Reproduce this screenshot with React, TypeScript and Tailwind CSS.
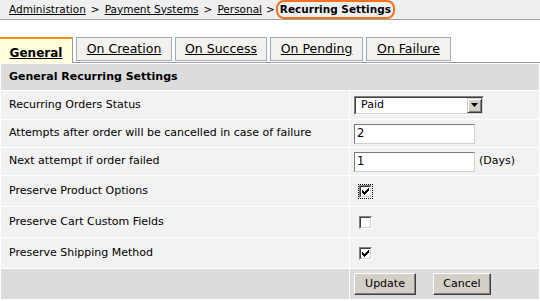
import React from 'react';

const font = "font-['DejaVu_Sans',Tahoma,sans-serif]";

function Checkbox({ checked, focused }: { checked: boolean; focused?: boolean }) {
  return (
    <div className={`p-px ${focused ? 'outline-1 outline-dotted outline-black -outline-offset-1' : ''}`}>
      <div className="w-[13px] h-[13px] border border-t-[#808080] border-l-[#808080] border-r-white border-b-white">
        <div className="w-full h-full bg-white border border-t-[#404040] border-l-[#404040] border-r-[#d4d0c8] border-b-[#d4d0c8] flex items-center justify-center">
          {checked && (
            <svg width="7" height="7" viewBox="0 0 7 7">
              <path d="M0 2h1v1h1v1h1V3h1V2h1V1h1V0h1v3H6v1H5v1H4v1H3v1H2V6H1V5H0z" fill="#000" />
            </svg>
          )}
        </div>
      </div>
    </div>
  );
}

function Button({ label, width }: { label: string; width: string }) {
  return (
    <button className={`${width} h-[22px] bg-[#d4d0c8] border border-t-white border-l-white border-r-[#404040] border-b-[#404040] shadow-[inset_-1px_-1px_0_#808080] text-[11px] text-black`}>
      {label}
    </button>
  );
}

export default function App() {
  const tabs = [
    { label: 'On Creation', w: 'w-[96px]' },
    { label: 'On Success', w: 'w-[92px]' },
    { label: 'On Pending', w: 'w-[93px]' },
    { label: 'On Failure', w: 'w-[85px]' },
  ];

  const rowCell = 'bg-[#f2f2f2] flex items-center';

  return (
    <div className={`${font} w-[540px] h-[301px] bg-white text-black text-[11px] overflow-hidden`}>
      {/* Breadcrumb */}
      <div className="h-[20px] bg-[#efefef] border-b border-[#a0a0a0] flex items-center pl-[9px] text-[10.5px]">
        <span className="underline">Administration</span>
        <span className="mx-[5px]">&gt;</span>
        <span className="underline">Payment Systems</span>
        <span className="mx-[5px]">&gt;</span>
        <span className="underline">Personal</span>
        <span className="ml-[4px] mr-px">&gt;</span>
        <span className="h-[19px] self-start border-2 border-[#f4721e] rounded-[8px] px-[2px] flex items-center font-bold text-[10.5px]">
          Recurring Settings
        </span>
      </div>

      {/* Tabs */}
      <div className="mt-[17px] h-[26px] flex items-start gap-[3px] border-b border-[#9a9a9a]">
        <div className="w-[73px] h-[26px] -mb-px bg-[#ffffdc] border-t-2 border-t-[#ff8a00] border-r border-r-[#9a9a9a] flex items-center justify-center pt-[3px] font-bold underline text-[12px]">
          General
        </div>
        {tabs.map((t) => (
          <div
            key={t.label}
            className={`${t.w} h-[24px] bg-[#f4f2ee] border border-[#9cacb8] flex items-center justify-center underline text-[12.5px]`}
          >
            {t.label}
          </div>
        ))}
      </div>

      {/* Settings table */}
      <div className="p-px bg-white">
        <div className="grid grid-cols-[348px_1fr] gap-px">
          <div className="col-span-2 h-[26px] bg-[#dcdcdc] flex items-center pl-[8px] font-bold">
            General Recurring Settings
          </div>

          <div className={`${rowCell} h-[28px] pl-[8px]`}>Recurring Orders Status</div>
          <div className={`${rowCell} pl-[4px]`}>
            <div className="w-[130px] h-[19px] border border-t-[#808080] border-l-[#808080] border-r-white border-b-white">
              <div className="h-full bg-white border border-t-[#404040] border-l-[#404040] border-r-[#d4d0c8] border-b-[#d4d0c8] flex items-center">
                <span className="flex-1 pl-[5px]">Paid</span>
                <div className="w-[15px] h-[15px] bg-[#d4d0c8] border border-t-[#d4d0c8] border-l-[#d4d0c8] border-r-[#404040] border-b-[#404040] shadow-[inset_1px_1px_0_#fff,inset_-1px_-1px_0_#808080] flex items-center justify-center">
                  <svg width="7" height="4" viewBox="0 0 7 4">
                    <path d="M0 0h7L3.5 4z" fill="#000" />
                  </svg>
                </div>
              </div>
            </div>
          </div>

          <div className={`${rowCell} h-[27px] pl-[8px]`}>Attempts after order will be cancelled in case of failure</div>
          <div className={`${rowCell} pl-[4px]`}>
            <div className="w-[121px] h-[20px] bg-white border border-t-[#7a7a7a] border-l-[#7a7a7a] border-r-[#d0d0d0] border-b-[#d0d0d0] flex items-center pl-[2px] text-[11.5px]">
              2
            </div>
          </div>

          <div className={`${rowCell} h-[27px] pl-[8px]`}>Next attempt if order failed</div>
          <div className={`${rowCell} pl-[4px]`}>
            <div className="w-[121px] h-[20px] bg-white border border-t-[#7a7a7a] border-l-[#7a7a7a] border-r-[#d0d0d0] border-b-[#d0d0d0] flex items-center pl-[2px] text-[11.5px]">
              1
            </div>
            <span className="ml-[4px]">(Days)</span>
          </div>

          <div className={`${rowCell} h-[30px] pl-[8px]`}>Preserve Product Options</div>
          <div className={`${rowCell} pl-[8px]`}>
            <Checkbox checked focused />
          </div>

          <div className={`${rowCell} h-[30px] pl-[8px]`}>Preserve Cart Custom Fields</div>
          <div className={`${rowCell} pl-[8px]`}>
            <Checkbox checked={false} />
          </div>

          <div className={`${rowCell} h-[30px] pl-[8px]`}>Preserve Shipping Method</div>
          <div className={`${rowCell} pl-[8px]`}>
            <Checkbox checked />
          </div>

          <div className="h-[30px] bg-[#dcdcdc]"></div>
          <div className="bg-[#dcdcdc] flex items-center pl-[4px] gap-[17px]">
            <Button label="Update" width="w-[62px]" />
            <Button label="Cancel" width="w-[58px]" />
          </div>
        </div>
      </div>
    </div>
  );
}
